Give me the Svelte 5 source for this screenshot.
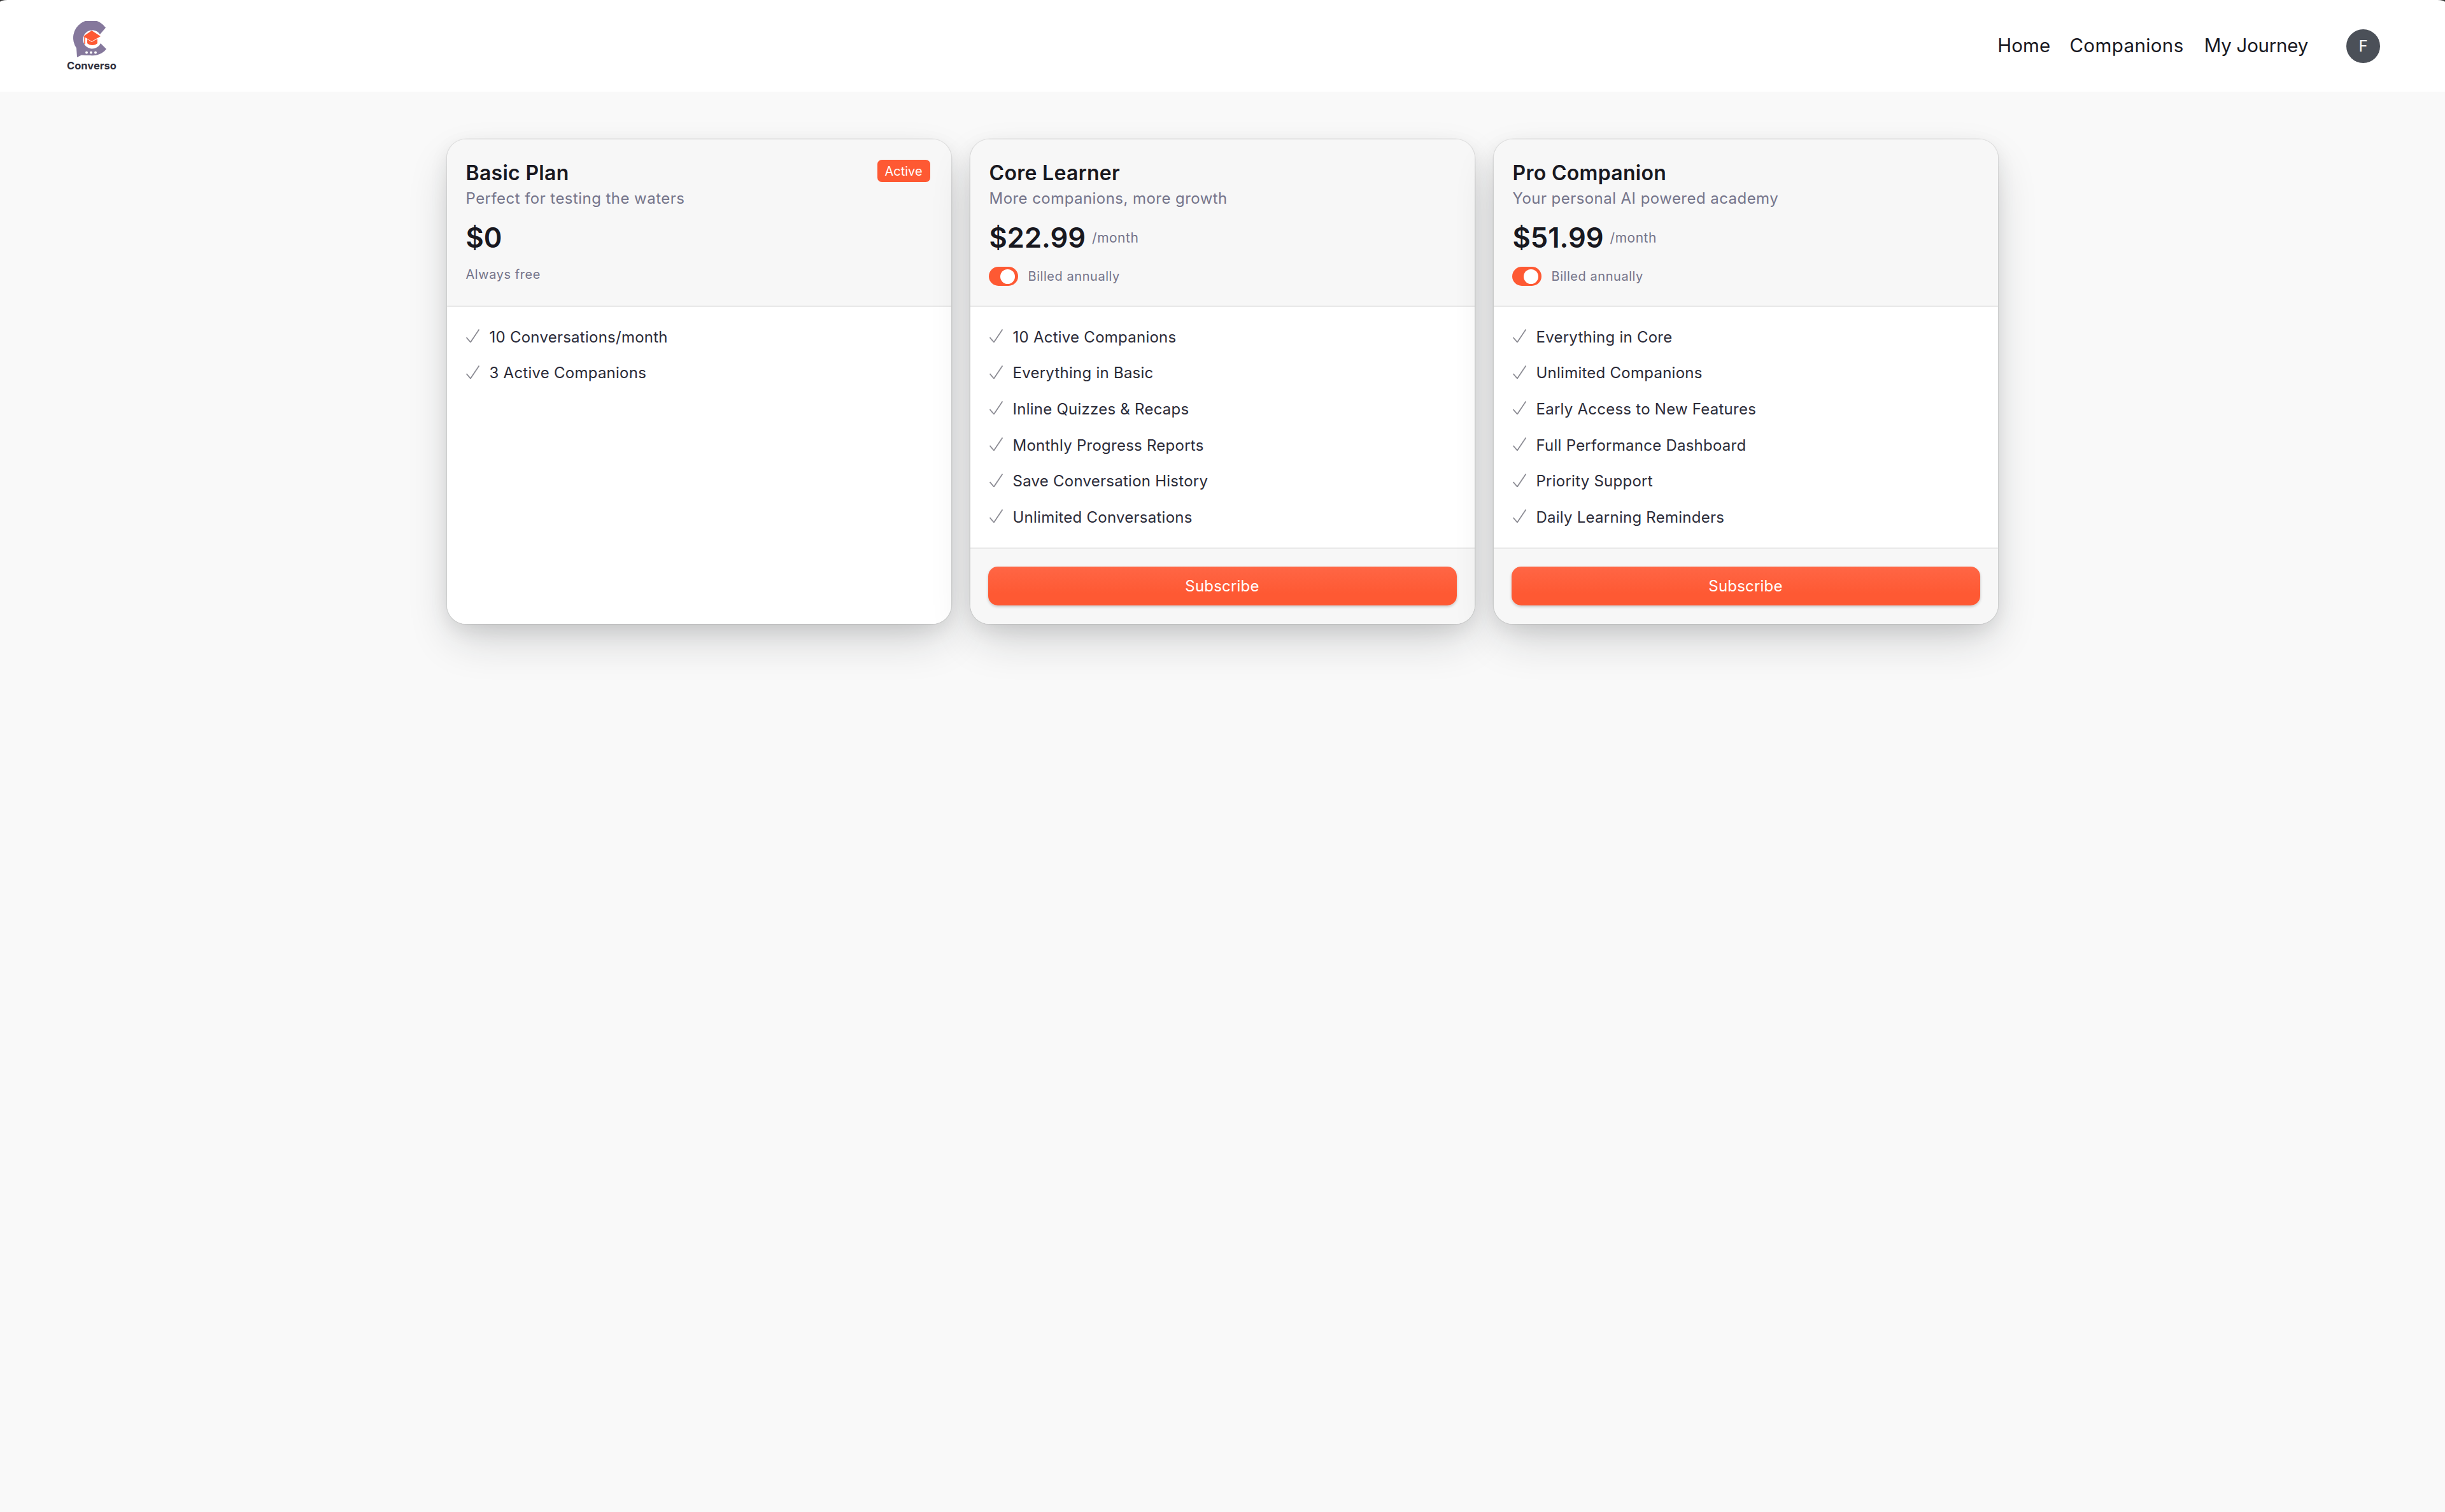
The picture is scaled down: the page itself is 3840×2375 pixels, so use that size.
<script>
  const plans = [
    {
      name: 'Basic Plan',
      desc: 'Perfect for testing the waters',
      price: '$0',
      active: true,
      features: ['10 Conversations/month', '3 Active Companions']
    },
    {
      name: 'Core Learner',
      desc: 'More companions, more growth',
      price: '$22.99',
      features: [
        '10 Active Companions',
        'Everything in Basic',
        'Inline Quizzes & Recaps',
        'Monthly Progress Reports',
        'Save Conversation History',
        'Unlimited Conversations'
      ]
    },
    {
      name: 'Pro Companion',
      desc: 'Your personal AI powered academy',
      price: '$51.99',
      features: [
        'Everything in Core',
        'Unlimited Companions',
        'Early Access to New Features',
        'Full Performance Dashboard',
        'Priority Support',
        'Daily Learning Reminders'
      ]
    }
  ];
</script>

<div class="window">
  <nav class="navbar">
    <a class="brand" href="/">
      <svg class="logo" width="56" height="60" viewBox="112 33 56 60" aria-hidden="true">
        <path d="M166 43.500 L157 54 A14.500 14.500 0 1 0 158 68 L167 77 A27 27 0 0 1 142 87 C137 87 133 87 128 86.500 L121 90 L120 75.500 A27 27 0 1 1 166 43.500 Z" fill="#85789c" />
        <path d="M131 57 L144 48 L158 57 L144 65 Z" fill="#fe5933" />
        <path d="M137 61.500 L144 66 L153 61 V68 C149 72 141 72 137 68 Z" fill="#fe5933" />
        <path d="M133 58 V69" stroke="#fe5933" stroke-width="1.500" fill="none" />
        <circle cx="136" cy="82.500" r="2" fill="#fff" />
        <circle cx="143" cy="82.500" r="2" fill="#fff" />
        <circle cx="150" cy="82.500" r="2" fill="#fff" />
      </svg>
      <span class="brand-name">Converso</span>
    </a>
    <div class="nav-right">
      <a href="/">Home</a>
      <a href="/companions">Companions</a>
      <a href="/journey">My Journey</a>
      <span class="avatar">F</span>
    </div>
  </nav>

  <main class="plans">
    {#each plans as plan}
      <section class="card">
        <header class="card-head">
          <div class="title-row">
            <h2>{plan.name}</h2>
            {#if plan.active}
              <span class="badge">Active</span>
            {/if}
          </div>
          <p class="desc">{plan.desc}</p>
          <div class="price-row">
            <span class="price">{plan.price}</span>
            {#if !plan.active}
              <span class="period">/month</span>
            {/if}
          </div>
          {#if plan.active}
            <p class="note">Always free</p>
          {:else}
            <div class="billing">
              <span class="toggle"><span class="thumb"></span></span>
              <span class="note">Billed annually</span>
            </div>
          {/if}
        </header>
        <ul class="features">
          {#each plan.features as feature}
            <li>
              <svg width="21" height="21" viewBox="0 0 21 21" fill="none" aria-hidden="true">
                <path d="M0.500 13 L7 20.500 L20.500 0.500" stroke="#8b8b93" stroke-width="1.800" />
              </svg>
              {feature}
            </li>
          {/each}
        </ul>
        {#if !plan.active}
          <footer class="card-foot">
            <button type="button">Subscribe</button>
          </footer>
        {/if}
      </section>
    {/each}
  </main>
</div>

<style>
  :global(body) {
    margin: 0;
    background: #f9f9f9;
    font-family: Inter, "Liberation Sans", sans-serif;
    color: #18181f;
  }

  .window {
    min-height: 100vh;
    background: linear-gradient(#333 0, #333 4px, #f9f9f9 4px);
  }
  .navbar {
    height: 144px;
    box-sizing: border-box;
    background: #fff;
    border-radius: 12px 12px 0 0 / 3px 3px 0 0;
    display: flex;
    align-items: center;
    justify-content: space-between;
    padding: 0 102px 0 105px;
  }
  .brand {
    display: flex;
    flex-direction: column;
    align-items: flex-start;
    text-decoration: none;
    color: #2f2f3d;
    margin-top: 1px;
  }
  .logo {
    display: block;
    margin-left: 7px;
  }
  .brand-name {
    font-size: 16.500px;
    font-weight: 700;
    line-height: 20px;
  }
  .nav-right {
    display: flex;
    align-items: center;
  }
  .nav-right a {
    font-size: 29.500px;
    letter-spacing: 0.400px;
    color: #18181f;
    text-decoration: none;
    margin: -2px 32px 0 0;
  }
  .nav-right a:first-child {
    margin-right: 30px;
    letter-spacing: 0.150px;
  }
  .nav-right a:last-of-type {
    margin-right: 60px;
    letter-spacing: -0.250px;
  }
  .avatar {
    width: 53px;
    height: 53px;
    border-radius: 50%;
    background: #4b5058;
    color: #fff;
    font-size: 24px;
    display: flex;
    align-items: center;
    justify-content: center;
  }

  .plans {
    display: grid;
    grid-template-columns: repeat(3, 792px);
    gap: 30px;
    justify-content: center;
    padding: 75px 1px 0 0;
  }
  .card {
    height: 761px;
    display: flex;
    flex-direction: column;
    background: #fff;
    border-radius: 30px;
    overflow: hidden;
    box-shadow:
      0 10px 30px rgba(0, 0, 0, 0.08),
      0 30px 70px -10px rgba(25, 28, 33, 0.2),
      0 0 0 1.500px rgba(0, 0, 0, 0.07);
  }
  .card-head {
    height: 263px;
    flex: none;
    box-sizing: border-box;
    padding: 30px 30px 0;
    background: #f7f7f7;
    border-bottom: 2px solid #e8e8e8;
  }
  .title-row {
    display: flex;
    justify-content: space-between;
    align-items: flex-start;
  }
  h2 {
    margin: 0;
    font-size: 32px;
    line-height: 45px;
    font-weight: 600;
    letter-spacing: 0.300px;
  }
  .badge {
    width: 83px;
    height: 35px;
    margin: 2px 3px 0 0;
    border-radius: 7px;
    background: #fe5933;
    color: #fff;
    font-size: 20px;
    display: flex;
    align-items: center;
    justify-content: center;
  }
  .desc {
    margin: 0;
    font-size: 24px;
    line-height: 36px;
    letter-spacing: 0.450px;
    color: #74748a;
  }
  .price-row {
    display: flex;
    align-items: center;
    gap: 10px;
    margin-top: 18px;
    height: 50px;
  }
  .price {
    font-size: 43.500px;
    font-weight: 600;
  }
  .period {
    font-size: 21px;
    letter-spacing: 0.500px;
    color: #74748a;
  }
  .note {
    margin: 0;
    font-size: 20px;
    letter-spacing: 0.550px;
    color: #74748a;
  }
  p.note {
    margin-top: 18px;
    line-height: 30px;
  }
  .billing {
    display: flex;
    align-items: center;
    gap: 16px;
    margin: 21px 0 0 -1px;
  }
  .toggle {
    width: 46px;
    height: 30px;
    border-radius: 15px;
    background: #fe5933;
    display: flex;
    align-items: center;
    justify-content: flex-end;
    padding-right: 5px;
    box-sizing: border-box;
  }
  .thumb {
    width: 23px;
    height: 23px;
    border-radius: 50%;
    background: #fff;
  }

  .features {
    flex: 1;
    list-style: none;
    margin: 0;
    padding: 19px 30px 0;
    background: #fff;
  }
  .features li {
    height: 56.600px;
    display: flex;
    align-items: center;
    gap: 16px;
    font-size: 24px;
    letter-spacing: 0.250px;
    color: #2b2b38;
  }
  .features svg {
    margin-top: -3px;
  }
  .card-foot {
    flex: none;
    height: 120px;
    box-sizing: border-box;
    padding: 28px 28px 0;
    background: #f7f7f7;
    border-top: 2px solid #e8e8e8;
  }
  button {
    display: block;
    width: 100%;
    height: 61px;
    border: none;
    border-radius: 15px;
    background: linear-gradient(#ff6645, #fe5933 70%);
    color: #fff;
    font-family: inherit;
    font-size: 24px;
    letter-spacing: 0.200px;
    box-shadow: 0 2px 4px rgba(0, 0, 0, 0.2);
  }
</style>
